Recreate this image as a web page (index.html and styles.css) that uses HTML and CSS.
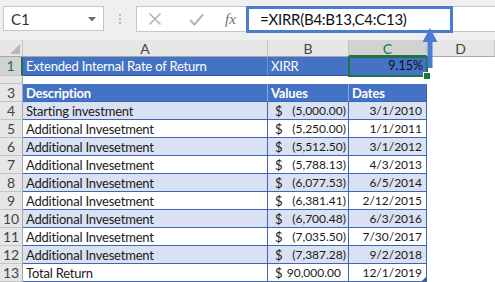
FILE: index.html
```html
<!DOCTYPE html>
<html lang="en">
<head>
  <meta charset="UTF-8">
  <title>XIRR example</title>
  <link rel="stylesheet" href="styles.css">
</head>
<body>
  <!-- Name box + formula bar -->
  <div class="toolbar">
    <div class="namebox">
      <span>C1</span>
      <svg class="drop" width="8" height="5" viewBox="0 0 8 5"><path d="M0 0H8L4 4.5Z" fill="#6a6a6a"/></svg>
    </div>
    <div class="dots"><i></i><i></i><i></i></div>
    <div class="formula">
      <div class="fbtns">
        <svg width="14" height="14" viewBox="0 0 14 14"><path d="M1.5 1.5L12.5 12.5M12.5 1.5L1.5 12.5" stroke="#b4b4b4" stroke-width="1.6"/></svg>
        <svg width="15" height="13" viewBox="0 0 15 13"><path d="M1 7L5.5 11.5L14 1.5" stroke="#b4b4b4" stroke-width="2" fill="none"/></svg>
        <span class="fx">fx</span>
      </div>
      <div class="finput">=XIRR(B4:B13,C4:C13)</div>
    </div>
  </div>

  <!-- Worksheet grid -->
  <div class="sheet">
    <div class="corner"></div>
    <div class="ch">A</div>
    <div class="ch">B</div>
    <div class="ch active">C</div>
    <div class="ch">D</div>

    <div class="rh active">1</div>
    <div class="c title">Extended Internal Rate of Return</div>
    <div class="c title">XIRR</div>
    <div class="c title rate">9.15%</div>
    <div class="c"></div>

    <div class="rh short">2</div>
    <div class="c gap"></div>
    <div class="c gap"></div>
    <div class="c gap"></div>
    <div class="c"></div>

    <div class="rh">3</div>
    <div class="c t head">Description</div>
    <div class="c t head">Values</div>
    <div class="c t head last">Dates</div>
    <div class="c"></div>

    <div class="rh">4</div>
    <div class="c t band">Starting investment</div>
    <div class="c t band val"><span>$</span><span>(5,000.00)</span></div>
    <div class="c t band last date">3/1/2010</div>
    <div class="c"></div>

    <div class="rh">5</div>
    <div class="c t">Additional Invesetment</div>
    <div class="c t val"><span>$</span><span>(5,250.00)</span></div>
    <div class="c t last date">1/1/2011</div>
    <div class="c"></div>

    <div class="rh">6</div>
    <div class="c t band">Additional Invesetment</div>
    <div class="c t band val"><span>$</span><span>(5,512.50)</span></div>
    <div class="c t band last date">3/1/2012</div>
    <div class="c"></div>

    <div class="rh">7</div>
    <div class="c t">Additional Invesetment</div>
    <div class="c t val"><span>$</span><span>(5,788.13)</span></div>
    <div class="c t last date">4/3/2013</div>
    <div class="c"></div>

    <div class="rh">8</div>
    <div class="c t band">Additional Invesetment</div>
    <div class="c t band val"><span>$</span><span>(6,077.53)</span></div>
    <div class="c t band last date">6/5/2014</div>
    <div class="c"></div>

    <div class="rh">9</div>
    <div class="c t">Additional Invesetment</div>
    <div class="c t val"><span>$</span><span>(6,381.41)</span></div>
    <div class="c t last date">2/12/2015</div>
    <div class="c"></div>

    <div class="rh">10</div>
    <div class="c t band">Additional Invesetment</div>
    <div class="c t band val"><span>$</span><span>(6,700.48)</span></div>
    <div class="c t band last date">6/3/2016</div>
    <div class="c"></div>

    <div class="rh">11</div>
    <div class="c t">Additional Invesetment</div>
    <div class="c t val"><span>$</span><span>(7,035.50)</span></div>
    <div class="c t last date">7/30/2017</div>
    <div class="c"></div>

    <div class="rh">12</div>
    <div class="c t band">Additional Invesetment</div>
    <div class="c t band val"><span>$</span><span>(7,387.28)</span></div>
    <div class="c t band last date">9/2/2018</div>
    <div class="c"></div>

    <div class="rh">13</div>
    <div class="c t">Total Return</div>
    <div class="c t val pos"><span>$</span><span>90,000.00</span></div>
    <div class="c t last date end">12/1/2019</div>
    <div class="c"></div>
  </div>

  <!-- Overlays: selected cell and the pointer arrow -->
  <div class="selection"><i class="handle"></i></div>
  <svg class="arrow" width="18" height="42" viewBox="0 0 18 42">
    <path d="M9 1L16.5 15H11.5V41H6.5V15H1.5Z" fill="#4a7dd1"/>
  </svg>
</body>
</html>
```

FILE: styles.css
```css
/* Reset */
html, body {
  margin: 0;
  padding: 0;
  width: 495px;
  height: 282px;
  overflow: hidden;
  background: #fff;
  font-family: Lato, "Liberation Sans", sans-serif;
  color: #1a1a1a;
}
body {
  position: relative;
}

/* Toolbar: name box and formula bar */
.toolbar {
  height: 40px;
  box-sizing: border-box;
  padding: 6px 0 0 3px;
  background: #efefef;
  display: flex;
  align-items: flex-start;
}
.namebox {
  width: 101px;
  height: 25px;
  box-sizing: border-box;
  border: 1px solid #c6c6c6;
  background: #fff;
  display: flex;
  align-items: center;
  justify-content: space-between;
  padding: 0 7px 0 7px;
  font-size: 15px;
  color: #333;
}
.namebox .drop {
  margin-top: 1px;
}
.dots {
  width: 32px;
  height: 26px;
  display: flex;
  flex-direction: column;
  align-items: center;
  justify-content: center;
  gap: 2px;
}
.dots i {
  width: 2px;
  height: 2px;
  background: #b8b8b8;
}
.formula {
  flex: 1;
  height: 26px;
  display: flex;
  background: #fff;
  border-top: 1px solid #c6c6c6;
  border-bottom: 1px solid #c6c6c6;
  border-left: 1px solid #c6c6c6;
  box-sizing: border-box;
}
.fbtns {
  width: 109px;
  display: flex;
  align-items: center;
  padding-left: 11px;
  gap: 27px;
  box-sizing: border-box;
}
.fx {
  font-family: "Liberation Serif", serif;
  font-style: italic;
  font-size: 15px;
  color: #707070;
  margin-left: -6px;
}
.finput {
  width: 207px;
  height: 27px;
  margin-top: -1px;
  box-sizing: border-box;
  border: 3px solid #4a7dd1;
  background: #fff;
  font-size: 15px;
  letter-spacing: -0.25px;
  color: #111;
  padding-left: 11px;
  line-height: 20px;
}

/* Worksheet grid */
.sheet {
  display: grid;
  grid-template-columns: 23px 245px 81px 78px 1fr;
  grid-template-rows: 17px 19px 8px repeat(11, 18px);
  font-size: 13px;
}
.sheet > div {
  box-sizing: border-box;
  white-space: nowrap;
  overflow: hidden;
}
.corner {
  background: #e6e6e6;
  border-right: 1px solid #c4c4c4;
  border-bottom: 1px solid #a6a6a6;
  position: relative;
}
.corner::after {
  content: "";
  position: absolute;
  right: 2px;
  bottom: 2px;
  border-left: 10px solid transparent;
  border-bottom: 10px solid #b8b8b8;
}
.ch {
  background: #e6e6e6;
  border-right: 1px solid #c4c4c4;
  border-bottom: 1px solid #a6a6a6;
  text-align: center;
  line-height: 17px;
  font-size: 14px;
  color: #444;
}
.ch.active {
  background: #d2d2d2;
  color: #217346;
  border-bottom: 2px solid #217346;
}
.rh {
  background: #e6e6e6;
  border-right: 1px solid #a6a6a6;
  border-bottom: 1px solid #c4c4c4;
  text-align: center;
  line-height: 18px;
  font-size: 14px;
  color: #444;
}
.rh.short {
  line-height: 30px;
}
.rh.active {
  background: #d2d2d2;
  color: #217346;
  border-right: 2px solid #217346;
}

/* Cells */
.c {
  padding: 0 3px;
  line-height: 18px;
  letter-spacing: -0.2px;
}
.title {
  background: #4472c4;
  color: #fff;
  border-bottom: 1px solid #2f5597;
  border-right: 1px solid #6d8fd0;
}
.title.rate {
  color: #111;
  text-align: right;
  border-right: none;
  padding-right: 4px;
  font-size: 12.5px;
  letter-spacing: 0;
}
.t {
  border-bottom: 1px solid #3e66b5;
  border-right: 1px solid #3e66b5;
}
.head {
  background: #4472c4;
  color: #fff;
  font-weight: bold;
  border-right-color: #8eaadc;
}
.head.last {
  border-right-color: #3e66b5;
}
.band {
  background: #d9e1f2;
}
.val {
  display: flex;
  justify-content: space-between;
  padding-left: 7px;
  padding-right: 2px;
  font-size: 12px;
  letter-spacing: 0;
}
.val span:first-child {
  font-size: 13px;
}
.val.pos {
  padding-right: 7px;
}
.date {
  text-align: right;
  padding-right: 4px;
  font-size: 12px;
  letter-spacing: 0;
}
.end {
  position: relative;
}
.end::after {
  content: "";
  position: absolute;
  right: 0;
  bottom: 0;
  border-left: 4px solid transparent;
  border-bottom: 4px solid #2f5597;
}

/* Overlays */
.selection {
  position: absolute;
  left: 348px;
  top: 56px;
  width: 80px;
  height: 21px;
  box-sizing: border-box;
  border: 2px solid #217346;
}
.handle {
  position: absolute;
  right: -5px;
  bottom: -5px;
  width: 6px;
  height: 6px;
  background: #217346;
  border: 1px solid #fff;
}
.arrow {
  position: absolute;
  left: 421px;
  top: 27px;
}
```
